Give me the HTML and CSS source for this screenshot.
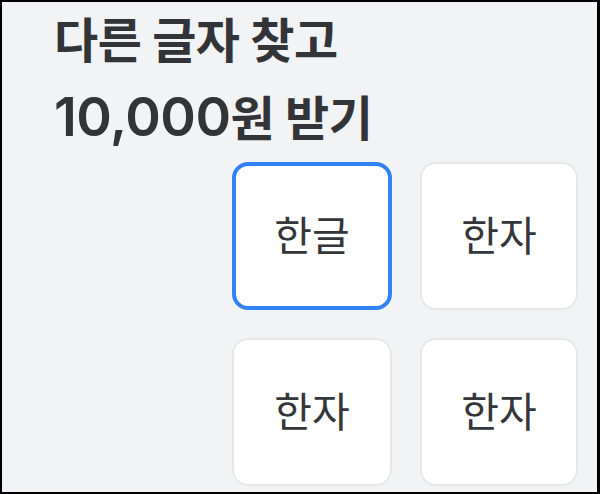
FILE: index.html
```html
<!DOCTYPE html>
<html lang="ko">

<head>
  <meta charset="UTF-8" />
  <meta name="viewport" content="width=device-width, initial-scale=1.0" />
  <title>다른 글자 찾기</title>
  <link rel="stylesheet" href="styles.css">
</head>

<body>
  <div class="frame">
    <h1 class="title">다른 글자 찾고<br><span class="amount">10,000</span>원 받기</h1>
    <div class="choices">
      <button class="choice active">한글</button>
      <button class="choice">한자</button>
      <button class="choice">한자</button>
      <button class="choice">한자</button>
    </div>
  </div>
</body>

</html>
```
FILE: styles.css
```css
* {
  margin: 0;
  padding: 0;
  box-sizing: border-box;
}

body {
  font-family: "Noto Sans CJK KR", "Noto Sans", sans-serif;
  background-color: #000;
}

.frame {
  width: 600px;
  height: 494px;
  border: 2px solid #000;
  border-right-width: 3px;
  background-color: #f2f3f5;
  overflow: hidden;
  padding: 0 19px 0 52px;
}

.title {
  font-family: Inter, "Noto Sans CJK KR", sans-serif;
  font-size: 48px;
  font-weight: 700;
  line-height: 78px;
  letter-spacing: -0.5px;
  color: #333438;
}

.amount {
  font-size: 54px;
  font-weight: 600;
  line-height: 1;
  letter-spacing: -0.5px;
}

.choices {
  display: grid;
  grid-template-columns: 160px 158px;
  grid-auto-rows: 148px;
  gap: 28px;
  justify-content: end;
  margin-top: 4px;
}

.choice {
  font-family: inherit;
  font-size: 41px;
  font-weight: 400;
  color: #35363a;
  background-color: #fff;
  border: 2px solid #e6e7ea;
  border-radius: 16px;
  padding-bottom: 6px;
}

.choice.active {
  border: 4px solid #3182f6;
}
```
